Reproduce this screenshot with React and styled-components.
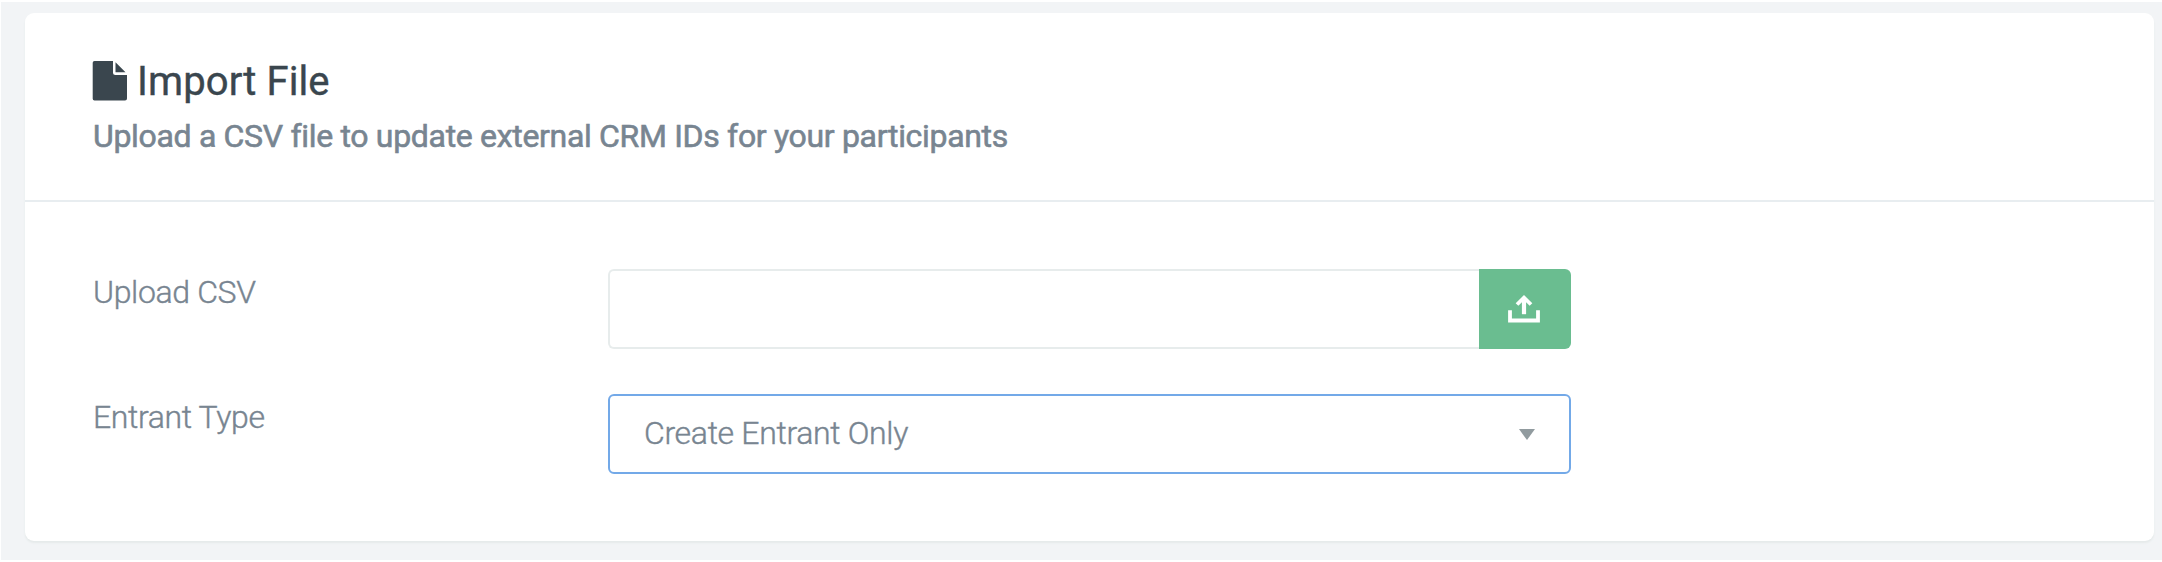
import React from 'react';
import styled, { createGlobalStyle } from 'styled-components';

const GlobalStyle = createGlobalStyle`
  * {
    box-sizing: border-box;
  }

  body {
    margin: 0;
    background: #fff;
    font-family: Roboto, "Liberation Sans", sans-serif;
    color: #788591;
  }
`;

const FileIcon = () => (
  <svg width="36" height="42" viewBox="0 0 36 42" fill="#3a464e" aria-hidden="true">
    <path d="M2.5 1H21V12.5A2.5 2.5 0 0 0 23.5 15H35V38.5A2 2 0 0 1 33 40.5H2.5A1.8 1.8 0 0 1 .7 38.7V2.8A1.8 1.8 0 0 1 2.5 1Z" />
    <path d="M23.5 2.2L33.5 12.2H23.5Z" />
  </svg>
);

const UploadIcon = () => (
  <svg width="32" height="28" viewBox="0 0 32 28" fill="none" stroke="#fff" aria-hidden="true">
    <path d="M2 15.3V25.5H30V15.3" strokeWidth="3.8" />
    <path d="M16 19.2V3" strokeWidth="4.2" />
    <path d="M9 9.5L16 2.7L23 9.5" strokeWidth="3.8" />
  </svg>
);

const App = () => (
  <Page>
    <GlobalStyle />
    <Card>
      <CardHeader>
        <Title>
          <FileIcon />
          <span>Import File</span>
        </Title>
        <Subtitle>Upload a CSV file to update external CRM IDs for your participants</Subtitle>
      </CardHeader>
      <CardBody>
        <FormRow>
          <Label htmlFor="csv">Upload CSV</Label>
          <InputGroup>
            <FileInput id="csv" readOnly />
            <UploadButton type="button" aria-label="Upload">
              <UploadIcon />
            </UploadButton>
          </InputGroup>
        </FormRow>
        <FormRow>
          <Label as="span">Entrant Type</Label>
          <Select type="button">
            <span>Create Entrant Only</span>
            <Caret />
          </Select>
        </FormRow>
      </CardBody>
    </Card>
  </Page>
);

const Page = styled.div`
  height: 558px;
  margin: 2px 0 0 1px;
  padding: 11px 8px 0 24px;
  background: #f2f4f6;
`;

const Card = styled.section`
  height: 528px;
  background: #fff;
  border-radius: 9px;
  box-shadow: 0 2px 2px #e5eaea;
`;

const CardHeader = styled.header`
  height: 189px;
  padding: 44px 67px 0;
  border-bottom: 2px solid #e8edf0;
`;

const Title = styled.h1`
  display: flex;
  align-items: center;
  gap: 9px;
  height: 48px;
  margin: 0;
  font-size: 40px;
  font-weight: 400;
  line-height: 48px;
  letter-spacing: .1px;
  color: #3a464e;
  -webkit-text-stroke: .4px;

  span {
    padding-top: 2px;
  }
`;

const Subtitle = styled.p`
  margin: 11px 0 0;
  padding-left: 1px;
  font-size: 32px;
  font-weight: 400;
  line-height: 40px;
  letter-spacing: -.32px;
  white-space: nowrap;
  -webkit-text-stroke: .6px;
`;

const CardBody = styled.div`
  display: flex;
  flex-direction: column;
  gap: 45px;
  padding: 67px 67px 0;
`;

const FormRow = styled.div`
  display: grid;
  grid-template-columns: 516px 963px;
  height: 80px;
`;

const Label = styled.label`
  padding: 3px 0 0 1px;
  font-size: 32px;
  font-weight: 300;
  line-height: 40px;
  letter-spacing: -.36px;
  -webkit-text-stroke: .4px;
`;

const InputGroup = styled.div`
  display: flex;
`;

const FileInput = styled.input`
  flex: 1;
  min-width: 0;
  height: 80px;
  padding: 0 34px;
  border: 2px solid #e7ecec;
  border-right: 0;
  border-radius: 6px 0 0 6px;
  background: #fff;
  font: 300 32px Roboto, sans-serif;
  color: inherit;
  outline: none;
`;

const UploadButton = styled.button`
  display: flex;
  align-items: center;
  justify-content: center;
  width: 92px;
  height: 80px;
  padding: 0 2px 0 0;
  border: 0;
  border-radius: 0 6px 6px 0;
  background: #6abd90;
`;

const Select = styled.button`
  display: flex;
  align-items: center;
  justify-content: space-between;
  height: 80px;
  padding: 0 34px 2px;
  border: 2px solid #73a9e8;
  border-radius: 6px;
  background: #fff;
  font: 300 32px Roboto, sans-serif;
  letter-spacing: -.33px;
  color: #788591;
  -webkit-text-stroke: .4px;
`;

const Caret = styled.span`
  margin-top: 2px;
  border: 8px solid transparent;
  border-top: 11px solid #919b9f;
  border-bottom: 0;
`;

export default App;
